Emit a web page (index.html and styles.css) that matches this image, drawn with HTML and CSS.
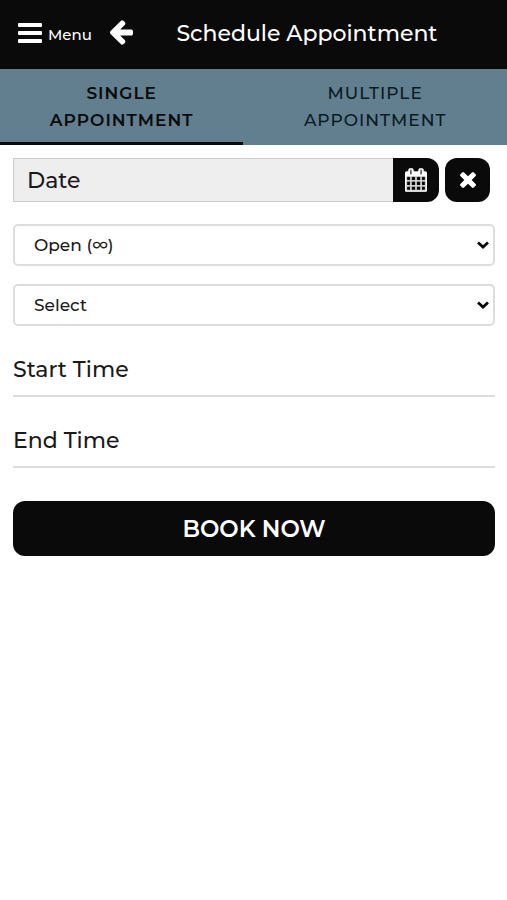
FILE: index.html
```html
<!DOCTYPE html>
<html lang="en">
  <head>
    <meta charset="utf-8">
    <meta name="viewport" content="width=device-width, initial-scale=1">
    <title>Schedule Appointment</title>
    <link rel="stylesheet" href="styles.css">
  </head>
  <body>
    <header class="topbar">
      <button type="button" class="menu-btn">
        <svg width="24" height="20" viewBox="0 0 24 20" aria-hidden="true">
          <rect width="24" height="4" rx="1"/>
          <rect y="8" width="24" height="4" rx="1"/>
          <rect y="16" width="24" height="4" rx="1"/>
        </svg>
        <span>Menu</span>
      </button>
      <a href="#" class="back" aria-label="Back">
        <svg width="23" height="25" viewBox="0 0 1472 1600" aria-hidden="true">
          <path fill="#fff" d="M1472 736v128q0 53-32.500 90.500t-84.500 37.500h-704l293 294q38 36 38 90t-38 90l-75 76q-37 37-90 37-52 0-91-37l-651-652q-37-37-37-90 0-52 37-91l651-650q38-38 91-38 52 0 90 38l75 74q38 38 38 91t-38 91l-293 293h704q52 0 84.500 37.500t32.500 90.500z"/>
        </svg>
      </a>
      <h1>Schedule Appointment</h1>
    </header>

    <nav class="tabs">
      <a href="#single" class="tab active">Single Appointment</a>
      <a href="#multiple" class="tab">Multiple Appointment</a>
    </nav>

    <form class="booking">
      <div class="date-row">
        <input type="text" class="date" placeholder="Date" aria-label="Date" readonly>
        <button type="button" class="icon-btn calendar" aria-label="Pick a date">
          <svg width="22" height="24" viewBox="64 0 1664 1792" aria-hidden="true">
            <path fill="#fff" stroke="#fff" stroke-width="40" d="M192 1664h288v-288h-288v288zm352 0h320v-288h-320v288zm-352-352h288v-320h-288v320zm352 0h320v-320h-320v320zm-352-384h288v-288h-288v288zm736 736h320v-288h-320v288zm-384-736h320v-288h-320v288zm768 736h288v-288h-288v288zm-384-352h320v-320h-320v320zm-352-864v-288q0-13-9.500-22.500t-22.500-9.500h-64q-13 0-22.500 9.500t-9.500 22.500v288q0 13 9.500 22.500t22.500 9.500h64q13 0 22.500-9.500t9.500-22.500zm736 864h288v-320h-288v320zm-384-384h320v-288h-320v288zm384 0h288v-288h-288v288zm32-480v-288q0-13-9.500-22.500t-22.500-9.500h-64q-13 0-22.500 9.500t-9.500 22.500v288q0 13 9.500 22.500t22.500 9.500h64q13 0 22.500-9.500t9.500-22.500zm384-64v1280q0 52-38 90t-90 38h-1408q-52 0-90-38t-38-90v-1280q0-52 38-90t90-38h128v-96q0-66 47-113t113-47h64q66 0 113 47t47 113v96h384v-96q0-66 47-113t113-47h64q66 0 113 47t47 113v96h128q52 0 90 38t38 90z"/>
          </svg>
        </button>
        <button type="button" class="icon-btn clear" aria-label="Clear date">
          <svg width="16" height="16" viewBox="302 366 1188 1188" aria-hidden="true">
            <path fill="#fff" d="M1490 1322q0 40-28 68l-136 136q-28 28-68 28t-68-28l-294-294-294 294q-28 28-68 28t-68-28l-136-136q-28-28-28-68t28-68l294-294-294-294q-28-28-28-68t28-68l136-136q28-28 68-28t68 28l294 294 294-294q28-28 68-28t68 28l136 136q28 28 28 68t-28 68l-294 294 294 294q28 28 28 68z"/>
          </svg>
        </button>
      </div>

      <div class="select-wrap">
        <select aria-label="Slot">
          <option>Open (∞)</option>
        </select>
        <svg class="chevron" width="12" height="8" viewBox="0 0 12 8" aria-hidden="true">
          <path d="M1 1.500l5 4.500 5-4.500" fill="none" stroke="#0a0a0a" stroke-width="2.800"/>
        </svg>
      </div>
      <div class="select-wrap">
        <select aria-label="Service">
          <option>Select</option>
        </select>
        <svg class="chevron" width="12" height="8" viewBox="0 0 12 8" aria-hidden="true">
          <path d="M1 1.500l5 4.500 5-4.500" fill="none" stroke="#0a0a0a" stroke-width="2.800"/>
        </svg>
      </div>

      <input type="text" class="time" placeholder="Start Time" aria-label="Start Time">
      <input type="text" class="time" placeholder="End Time" aria-label="End Time">

      <button type="submit" class="book">Book Now</button>
    </form>
  </body>
</html>
```

FILE: styles.css
```css
* {
  box-sizing: border-box;
}
body {
  margin: 0;
  background: #fff;
  color: #0a0a0a;
  font-family: Montserrat, Inter, sans-serif;
  font-weight: 500;
}
button, input, select {
  font: inherit;
  color: inherit;
}
button {
  border: 0;
  padding: 0;
  cursor: pointer;
}

.topbar {
  display: flex;
  align-items: center;
  height: 69px;
  padding: 0 18px 4px;
  background: #0a0a0a;
  color: #fff;
}
.menu-btn {
  display: flex;
  align-items: center;
  gap: 6px;
  background: none;
  font-size: 15px;
}
.menu-btn svg {
  fill: #fff;
}
.menu-btn span {
  padding-top: 4px;
}
.back {
  display: flex;
  margin-left: 18px;
}
h1 {
  flex: 1;
  margin: 0;
  padding: 2px 8px 0 0;
  text-align: center;
  font-size: 22px;
  font-weight: 500;
  line-height: 30px;
}

.tabs {
  display: grid;
  grid-template-columns: 48% 52%;
  background: #617f8f;
}
.tab {
  padding: 11px 40px 8px;
  border-bottom: 3px solid transparent;
  color: #0a1a22;
  font-size: 17px;
  line-height: 27px;
  letter-spacing: 1px;
  text-align: center;
  text-decoration: none;
  text-transform: uppercase;
}
.tab.active {
  border-color: #0a0a0a;
  color: #0a0a0a;
  font-weight: 600;
}

.booking {
  display: flex;
  flex-direction: column;
  padding: 13px 12px 0 13px;
}
.date-row {
  display: flex;
  height: 44px;
  margin-bottom: 22px;
  padding-right: 5px;
}
.date {
  flex: 1;
  min-width: 0;
  padding: 0 13px;
  border: 1px solid #ccc;
  border-right: 0;
  border-radius: 0;
  background: #eee;
  font-size: 22px;
}
::placeholder {
  color: #1a1a1a;
  opacity: 1;
}
.icon-btn {
  display: flex;
  align-items: center;
  justify-content: center;
  background: #0a0a0a;
}
.calendar {
  width: 46px;
  border-radius: 0 12px 12px 0;
}
.clear {
  width: 45px;
  margin-left: 6px;
  border-radius: 12px;
}

.select-wrap {
  position: relative;
  margin-bottom: 18px;
}
select {
  display: block;
  width: 100%;
  height: 42px;
  padding: 0 19px;
  border: 2px solid #ddd;
  border-radius: 5px;
  background: #fff;
  color: #1a1a1a;
  font-size: 17px;
  appearance: none;
}
.chevron {
  position: absolute;
  top: 17px;
  right: 6px;
  pointer-events: none;
}

.time {
  width: 100%;
  height: 53px;
  margin-bottom: 18px;
  padding: 0;
  border: 0;
  border-bottom: 2px solid #ddd;
  background: none;
  font-size: 22px;
}

.book {
  height: 55px;
  margin-top: 15px;
  border-radius: 12px;
  background: #0a0a0a;
  color: #fff;
  font-size: 23px;
  font-weight: 600;
  text-transform: uppercase;
}
```
